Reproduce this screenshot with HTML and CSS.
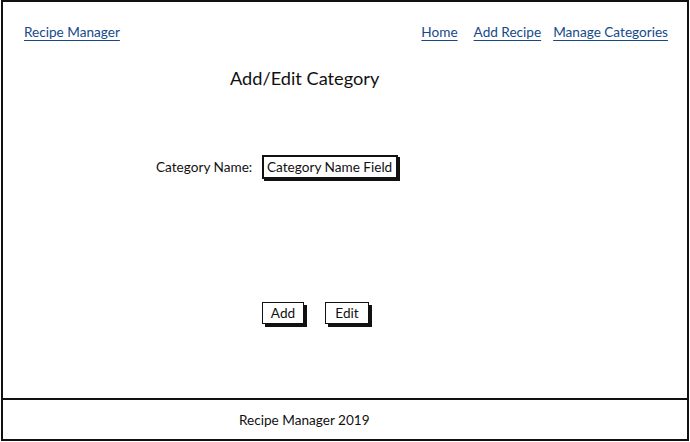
FILE: index.html
```html
<!DOCTYPE html>
<html>
<head>
<meta charset="utf-8">
<link rel="stylesheet" href="styles.css">
</head>
<body>
<div class="page">
  <div class="main">
    <div class="header">
      <a class="link brand" href="#">Recipe Manager</a>
      <nav class="nav">
        <a class="link nav-home" href="#">Home</a>
        <a class="link nav-add" href="#">Add Recipe</a>
        <a class="link nav-manage" href="#">Manage Categories</a>
      </nav>
    </div>
    <h1 class="title">Add/Edit Category</h1>
    <div class="form-row">
      <span class="label">Category Name:</span>
      <div class="field">Category Name Field</div>
    </div>
    <div class="buttons">
      <button class="btn btn-add">Add</button>
      <button class="btn btn-edit">Edit</button>
    </div>
  </div>
  <div class="footer">
    <span class="footer-text">Recipe Manager 2019</span>
  </div>
</div>
</body>
</html>
```
FILE: styles.css
```css
html, body {
  margin: 0;
  padding: 0;
  background: #fff;
}
body {
  font-family: "Lato", "Open Sans", sans-serif;
  color: #111;
  font-size: 13.6px;
}
.page {
  width: 688px;
  margin-left: 1px;
  display: flex;
  flex-direction: column;
}
.main {
  height: 396px;
  border: 2px solid #111;
  display: flex;
  flex-direction: column;
}
.header {
  display: flex;
  justify-content: space-between;
  align-items: center;
  padding: 22px 19px 0 21px;
  line-height: 16px;
}
.link {
  color: #16498a;
  text-decoration: underline;
  text-underline-offset: 3px;
  text-decoration-thickness: 1px;
}
.nav {
  display: flex;
}
.nav-add {
  margin-left: 16px;
}
.nav-manage {
  margin-left: 12px;
}
.title {
  margin: 28px 0 0 227px;
  font-size: 18.2px;
  font-weight: normal;
  line-height: 20px;
}
.form-row {
  display: flex;
  align-items: center;
  margin: 67px 0 0 153px;
}
.label {
  width: 106px;
}
.field {
  border: 2px solid #111;
  box-shadow: 2px 2px 0 #111;
  padding: 0 3px;
  height: 20px;
  line-height: 20px;
  width: 126px;
  white-space: nowrap;
  overflow: hidden;
}
.buttons {
  display: flex;
  margin: 123px 0 0 259px;
}
.btn {
  font-family: inherit;
  font-size: 13.6px;
  color: #111;
  background: #fff;
  border: 1.5px solid #111;
  box-shadow: 3px 3px 0 #111;
  height: 22px;
  padding: 0;
  line-height: 19px;
}
.btn-add {
  width: 42px;
}
.btn-edit {
  width: 44px;
  margin-left: 21px;
}
.footer {
  height: 39px;
  border: 2px solid #111;
  border-top: 0;
  display: flex;
  align-items: center;
  padding-left: 236px;
}
.footer-text {
  padding-top: 1px;
}
```
